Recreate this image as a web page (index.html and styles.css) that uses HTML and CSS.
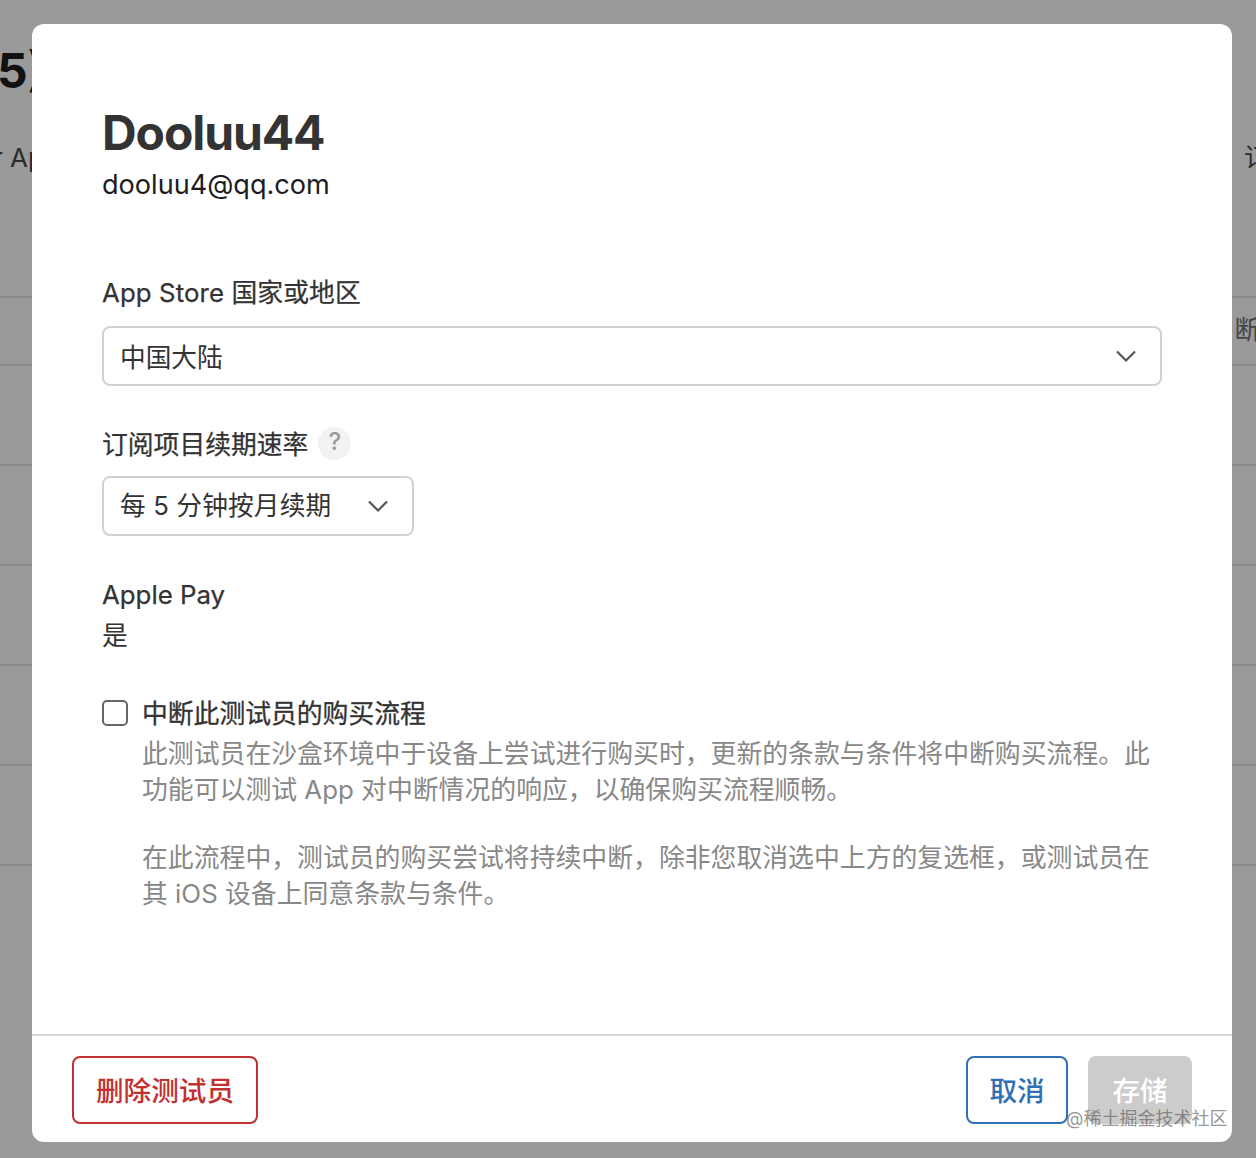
FILE: index.html
```html
<!DOCTYPE html>
<html lang="zh-CN">
<head>
<meta charset="utf-8">
<title>Dooluu44</title>
<link rel="stylesheet" href="styles.css">
</head>
<body>
<div class="backdrop">
  <div class="bg-title">5)</div>
  <div class="bg-head"><span class="bg-app">r Ap</span><span>订</span></div>
  <div class="bg-row first"><span></span><span class="bg-cut">断</span></div>
  <div class="bg-row"></div>
  <div class="bg-row"></div>
  <div class="bg-row"></div>
  <div class="bg-row"></div>
  <div class="bg-row"></div>
  <div class="bg-row"></div>
</div>
<div class="modal">
  <div class="modal-body">
    <h1 class="name">Dooluu44</h1>
    <div class="email">dooluu4@qq.com</div>

    <div class="label label-store">App Store 国家或地区</div>
    <div class="select select-wide">
      <span>中国大陆</span>
      <svg class="chev" width="22" height="14" viewBox="0 0 22 14"><path d="M2 2.5 11 11.5 20 2.5" fill="none" stroke="#555" stroke-width="2.2"/></svg>
    </div>

    <div class="label label-rate">订阅项目续期速率 <span class="help">?</span></div>
    <div class="select select-narrow">
      <span>每 5 分钟按月续期</span>
      <svg class="chev" width="22" height="14" viewBox="0 0 22 14"><path d="M2 2.5 11 11.5 20 2.5" fill="none" stroke="#555" stroke-width="2.2"/></svg>
    </div>

    <div class="label label-pay">Apple Pay</div>
    <div class="value">是</div>

    <div class="check-row">
      <span class="checkbox"></span>
      <div class="check-text">
        <div class="check-title">中断此测试员的购买流程</div>
        <p class="desc">此测试员在沙盒环境中于设备上尝试进行购买时，更新的条款与条件将中断购买流程。此功能可以测试 App 对中断情况的响应，以确保购买流程顺畅。</p>
        <p class="desc">在此流程中，测试员的购买尝试将持续中断，除非您取消选中上方的复选框，或测试员在其 iOS 设备上同意条款与条件。</p>
      </div>
    </div>
  </div>
  <div class="modal-foot">
    <button class="btn btn-danger">删除测试员</button>
    <div class="foot-right">
      <button class="btn btn-cancel">取消</button>
      <button class="btn btn-save">存储</button>
    </div>
  </div>
</div>
<div class="watermark">@稀土掘金技术社区</div>
</body>
</html>
```
FILE: styles.css
```css
* { box-sizing: border-box; }
html, body { margin: 0; padding: 0; }
body {
  width: 1256px;
  height: 1158px;
  overflow: hidden;
  position: relative;
  background: #9a9a9a;
  font-family: Inter, "Noto Sans CJK SC", sans-serif;
  color: #333;
}
.backdrop { display: flex; flex-direction: column; height: 1158px; color: #1c1c1c; }
.bg-title { font-size: 48px; font-weight: 700; line-height: 58px; margin: 42px 0 0 -3px; color: #111; height: 58px; }
.bg-head { display: flex; justify-content: space-between; font-size: 26px; line-height: 32px; margin-top: 42px; height: 154px; color: #2a2a2a; }
.bg-head span:last-child { margin-right: -14px; }
.bg-app { margin-left: -7px; }
.bg-row { height: 100px; flex: none; border-top: 2px solid #8a8a8a; display: flex; justify-content: space-between; align-items: flex-start; font-size: 25.6px; color: #444; }
.bg-row.first { height: 68px; }
.bg-cut { margin-right: -4px; margin-top: 14px; line-height: 36px; }
.modal {
  position: absolute;
  left: 32px;
  top: 24px;
  width: 1200px;
  height: 1118px;
  background: #fff;
  border-radius: 12px;
  display: flex;
  flex-direction: column;
  overflow: hidden;
}
.modal-body { flex: 1; padding: 80px 70px 0; }
.name { margin: 0; font-size: 48px; font-weight: 700; line-height: 58px; color: #333; letter-spacing: -1.1px; }
.email { font-size: 27.1px; line-height: 40px; color: #1d1d1f; margin-top: 3px; }
.label { font-size: 25.8px; line-height: 36px; color: #333; -webkit-text-stroke: 0.25px #333; }
.label-store { margin-top: 70px; letter-spacing: 0.1px; }
.label-rate { margin-top: 41px; display: flex; align-items: center; gap: 10px; height: 36px; }
.label-pay { margin-top: 41px; }
.help {
  width: 33px; height: 33px; border-radius: 50%;
  background: #f2f2f2; color: #999; font-size: 24px; font-weight: 500;
  display: flex; align-items: center; justify-content: center;
  line-height: 1; margin-top: -4px; padding-bottom: 3px;
  -webkit-text-stroke: 0;
}
.select {
  height: 60px;
  border: 2px solid #d2d2d2;
  border-radius: 8px;
  margin-top: 15px;
  display: flex;
  align-items: center;
  justify-content: space-between;
  padding: 0 23px 2px 16px;
  font-size: 25.7px;
  color: #333;
}
.select-wide { width: 1060px; }
.select-narrow { width: 312px; margin-top: 13px; padding-bottom: 6px; letter-spacing: 0.15px; }
.select-narrow .chev { margin-top: 6px; }
.select-wide .chev { margin-top: 2px; }
.value { font-size: 25.8px; line-height: 36px; margin-top: 5px; color: #333; }
.check-row { display: flex; gap: 14px; margin-top: 42px; }
.checkbox { width: 26px; height: 26px; flex: none; border: 2px solid #666; border-radius: 5px; background: #fff; margin-top: 4px; }
.check-text { width: 1010px; }
.check-title { font-size: 25.8px; line-height: 36px; font-weight: 400; color: #333; -webkit-text-stroke: 0.3px #333; }
.desc { margin: 4px 0 32px; font-size: 25.85px; line-height: 36px; color: #888; }
.desc + .desc { margin-top: 0; }
.modal-foot {
  height: 108px;
  border-top: 2px solid #d6d6d6;
  display: flex;
  justify-content: space-between;
  align-items: flex-start;
  padding: 20px 40px 0;
}
.foot-right { display: flex; gap: 20px; }
.btn {
  height: 68px;
  font-family: inherit;
  font-size: 27.6px;
  font-weight: 500;
  border-radius: 8px;
  background: #fff;
  padding: 0 0 3px;
}
.btn-danger { width: 186px; border: 2px solid #c23030; color: #c23030; }
.btn-cancel { width: 102px; border: 2px solid #2f6fb5; color: #2f6fb5; }
.btn-save { width: 104px; border: 0; background: #cccccc; color: #fff; }
.watermark {
  position: absolute;
  left: 1066px;
  top: 1107px;
  font-size: 18px;
  line-height: 24px;
  color: rgba(90, 90, 90, 0.65);
  white-space: nowrap;
}
```
